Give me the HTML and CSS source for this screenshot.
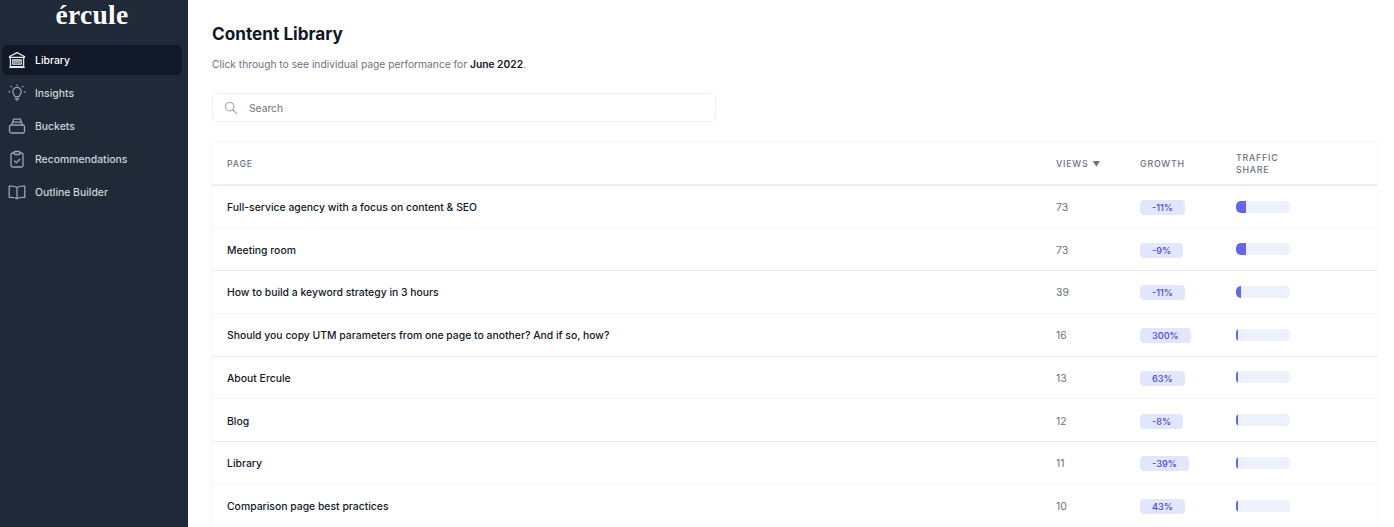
FILE: index.html
```html
<!DOCTYPE html>
<html lang="en">
<head>
<meta charset="utf-8">
<title>Content Library</title>
<link rel="stylesheet" href="styles.css">
</head>
<body>
<div class="app">
  <aside class="sidebar">
    <div class="logo">ércule</div>
    <nav class="nav">
      <a class="nav-item active">
        <svg class="nav-icon" viewBox="0 0 18 18" fill="none" stroke="currentColor" stroke-width="1.3" stroke-linejoin="round"><path d="M1.500 5.500 9 1.700l7.500 3.800v.9h-15z"/><path d="M2.400 6.400v9.200h13.200V6.400"/><path d="M1.200 16.400h15.600"/><rect x="4.800" y="9" width="8.400" height="4.200"/><path d="M7 10v2.200M9 10v2.200M11 10v2.200"/></svg>
        <span>Library</span>
      </a>
      <a class="nav-item">
        <svg class="nav-icon" viewBox="0 0 18 18" fill="none" stroke="currentColor" stroke-width="1.2" stroke-linecap="round" stroke-linejoin="round"><path d="M6.800 12.600c0-1.600-2-2.500-2-5a4.200 4.200 0 0 1 8.400 0c0 2.500-2 3.400-2 5z"/><path d="M7.400 14.600h3.200M8 16h2"/><path d="M9 .8v.8M2.900 2.300l.6.6M15.100 2.300l-.6.6M.8 7.800h1M16.200 7.800h1"/></svg>
        <span>Insights</span>
      </a>
      <a class="nav-item">
        <svg class="nav-icon" viewBox="0 0 18 18" fill="none" stroke="currentColor" stroke-width="1.3" stroke-linejoin="round"><rect x="1.500" y="8" width="15" height="8" rx="2"/><path d="M3.500 8 4.600 5.200h8.800L14.500 8"/><path d="M4.800 5.200 5.600 2.200h6.800l.8 3"/></svg>
        <span>Buckets</span>
      </a>
      <a class="nav-item">
        <svg class="nav-icon" viewBox="0 0 18 18" fill="none" stroke="currentColor" stroke-width="1.3" stroke-linecap="round" stroke-linejoin="round"><path d="M6 3H4.500A1.500 1.500 0 0 0 3 4.500v11A1.500 1.500 0 0 0 4.500 17h9a1.500 1.500 0 0 0 1.500-1.500v-11A1.500 1.500 0 0 0 13.500 3H12"/><rect x="6" y="1.500" width="6" height="3" rx="1"/><path d="m6.500 11 1.800 1.800 3.500-3.500"/></svg>
        <span>Recommendations</span>
      </a>
      <a class="nav-item">
        <svg class="nav-icon" viewBox="0 0 18 18" fill="none" stroke="currentColor" stroke-width="1.3" stroke-linejoin="round"><path d="M9 4.500C7.500 3.300 4.500 3 1.200 3.200v11.200c3.300-.2 6.300.1 7.800 1.300 1.500-1.200 4.500-1.500 7.800-1.300V3.200C13.500 3 10.500 3.300 9 4.500zM9 4.500v11.200"/></svg>
        <span>Outline Builder</span>
      </a>
    </nav>
  </aside>
  <main class="main">
    <h1 class="title">Content Library</h1>
    <p class="subtitle">Click through to see individual page performance for <strong>June 2022</strong>.</p>
    <div class="search">
      <svg class="search-icon" viewBox="0 0 16 16" fill="none" stroke="currentColor" stroke-width="1.300" stroke-linecap="round"><circle cx="6.500" cy="6.500" r="4.800"/><path d="m10 10 4.500 4.500"/></svg>
      <span class="search-text">Search</span>
    </div>
    <table class="table">
      <thead>
        <tr>
          <th class="col-page">PAGE</th>
          <th class="col-views">VIEWS <span class="sort">▼</span></th>
          <th class="col-growth">GROWTH</th>
          <th class="col-share">TRAFFIC<br>SHARE</th>
        </tr>
      </thead>
      <tbody>
        <tr><td class="page">Full-service agency with a focus on content &amp; SEO</td><td>73</td><td><span class="badge">-11%</span></td><td><div class="bar"><div class="fill" style="width:18%"></div></div></td></tr>
        <tr><td class="page">Meeting room</td><td>73</td><td><span class="badge">-9%</span></td><td><div class="bar"><div class="fill" style="width:18%"></div></div></td></tr>
        <tr><td class="page">How to build a keyword strategy in 3 hours</td><td>39</td><td><span class="badge">-11%</span></td><td><div class="bar"><div class="fill" style="width:10%"></div></div></td></tr>
        <tr><td class="page">Should you copy UTM parameters from one page to another? And if so, how?</td><td>16</td><td><span class="badge">300%</span></td><td><div class="bar"><div class="fill" style="width:4%"></div></div></td></tr>
        <tr><td class="page">About Ercule</td><td>13</td><td><span class="badge">63%</span></td><td><div class="bar"><div class="fill" style="width:4%"></div></div></td></tr>
        <tr><td class="page">Blog</td><td>12</td><td><span class="badge">-8%</span></td><td><div class="bar"><div class="fill" style="width:3%"></div></div></td></tr>
        <tr><td class="page">Library</td><td>11</td><td><span class="badge">-39%</span></td><td><div class="bar"><div class="fill" style="width:3%"></div></div></td></tr>
        <tr><td class="page">Comparison page best practices</td><td>10</td><td><span class="badge">43%</span></td><td><div class="bar"><div class="fill" style="width:3%"></div></div></td></tr>
      </tbody>
    </table>
  </main>
</div>
</body>
</html>
```

FILE: styles.css
```css
* { box-sizing: border-box; }
html, body { margin: 0; height: 100%; overflow: hidden; background: #fff; }
body { font-family: Inter, "Liberation Sans", sans-serif; color: #111827; }
.app { display: flex; height: 527px; }
.sidebar { width: 188px; flex: none; background: #1f2937; }
.logo { font-family: "Liberation Serif", serif; font-weight: 700; font-size: 27.500px; line-height: 30px; color: #fff; text-align: center; height: 45px; padding-right: 4px; letter-spacing: .3px; }
.nav { display: flex; flex-direction: column; gap: 3px; padding: 0 6px 0 2px; }
.nav-item { display: flex; align-items: center; height: 30px; padding-left: 6px; border-radius: 6px; font-size: 10.400px; font-weight: 500; color: #d1d5db; }
.nav-item.active { background: #111827; color: #fff; }
.nav-icon { width: 18px; height: 18px; margin-right: 9px; flex: none; color: #9ca3af; }
.active .nav-icon { color: #e5e7eb; }
.main { flex: 1; padding: 21px 17px 0 24px; min-width: 0; }
.title { margin: 0; padding-top: 1px; font-size: 17.200px; line-height: 24px; font-weight: 700; color: #111827; }
.subtitle { margin: 10px 0 0; font-size: 10.250px; line-height: 16px; color: #6b7280; }
.subtitle strong { font-weight: 600; color: #111827; }
.search { display: flex; align-items: center; width: 504px; height: 29px; margin-top: 21px; padding-left: 11px; border: 1px solid #f0f1f3; border-radius: 6px; }
.search-icon { width: 14px; height: 14px; color: #9ca3af; margin-right: 11px; }
.search-text { font-size: 10.250px; color: #6b7280; }
.table { width: 100%; margin-top: 20px; border-collapse: collapse; table-layout: fixed; box-shadow: 0 0 2px rgba(0,0,0,.1); }
th { height: 43px; padding: 2px 15px 0; text-align: left; font-size: 8.800px; line-height: 12px; font-weight: 500; letter-spacing: .8px; color: #6b7280; border-bottom: 2px solid #eceef1; }
td { height: 42.750px; padding: 2px 15px 0; font-size: 10.400px; color: #6b7280; border-bottom: 1px solid #f3f4f6; }
tbody tr:nth-child(even) td { border-bottom-color: #e9ebee; }
.col-page { width: 829px; }
.col-views { width: 84px; }
.col-growth { width: 96px; }
.sort { font-size: 7.500px; margin-left: 1px; }
td.page { font-weight: 500; color: #111827; }
.badge { display: inline-block; height: 15px; line-height: 15px; padding: 0 12px; border-radius: 4px; background: #e0e7ff; color: #4f46e5; font-size: 9.200px; font-weight: 500; }
.bar { width: 54px; height: 12px; border-radius: 4px; background: #eef2ff; overflow: hidden; position: relative; top: -1px; }
.fill { height: 100%; background: #6366f1; border-radius: 5px 0 0 5px; }
```
